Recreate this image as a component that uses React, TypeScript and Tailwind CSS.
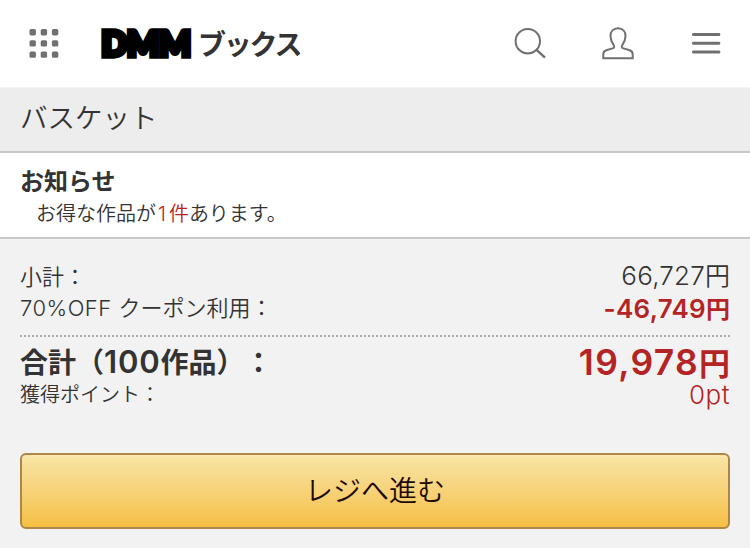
import type { ReactNode } from "react";

function GridIcon() {
  const cells = [0, 11.2, 22.4];
  return (
    <svg width="30" height="30" viewBox="0 0 30 30" fill="#707070">
      {cells.map((y) =>
        cells.map((x) => (
          <rect key={`${x}-${y}`} x={x + 0.5} y={y} width="6.4" height="6.4" rx="1.6" />
        ))
      )}
    </svg>
  );
}

function SearchIcon() {
  return (
    <svg width="32" height="32" viewBox="0 0 32 32" fill="none" stroke="#707070" strokeWidth="2">
      <circle cx="13.8" cy="13.2" r="12.2" />
      <path d="M22.3 21.7 31 29.7" strokeWidth="2.4" />
    </svg>
  );
}

function UserIcon() {
  return (
    <svg width="32" height="34" viewBox="0 0 32 34" fill="none" stroke="#707070" strokeWidth="2">
      <path d="M16 1.2c-4.6 0-7.5 3.3-7.5 7.7 0 3.6 1.3 6.6 3.2 9.2 1 1.4.5 2.7-1.2 3.3L4.3 23.3C2 24.1 1.3 25.3 1.3 27.3V31.2H30.7V27.3C30.7 25.3 30 24.1 27.7 23.3L21.5 21.4C19.8 20.8 19.3 19.5 20.3 18.1 22.2 15.5 23.5 12.5 23.5 8.9 23.5 4.5 20.6 1.2 16 1.2Z" />
    </svg>
  );
}

function MenuIcon() {
  return (
    <svg width="30" height="22" viewBox="0 0 30 22" stroke="#707070" strokeWidth="3" strokeLinecap="round">
      <path d="M2.4 1.6H27.9M2.4 10.3H27.9M2.4 18.9H27.9" />
    </svg>
  );
}

function Logo() {
  return (
    <div className="flex items-center">
      <svg width="94" height="40" viewBox="0 0 94 40" className="overflow-visible font-['Lato',sans-serif]">
        <text x="1.5 27 59" y="32.2" fontSize="33.5" fontWeight="900" stroke="#000" strokeWidth="5.5" strokeLinejoin="miter">
          DMM
        </text>
      </svg>
      <span className="mt-0.5 ml-[4px] text-[28px] leading-8 font-bold tracking-[-2.2px] text-[#333]">ブックス</span>
    </div>
  );
}

function Row({ label, children }: { label: ReactNode; children: ReactNode }) {
  return (
    <div className="flex h-8 items-center justify-between whitespace-nowrap">
      {label}
      {children}
    </div>
  );
}

export default function App() {
  return (
    <div className="h-[548px] w-[750px] overflow-hidden bg-[#f2f2f2] font-['Inter','Noto_Sans_CJK_JP',sans-serif] text-[#333] [text-spacing-trim:space-all]">
      <header className="flex h-[87px] items-center justify-between bg-white pr-[29px] pl-[29px]">
        <div className="flex items-center gap-[41px]">
          <GridIcon />
          <Logo />
        </div>
        <div className="flex items-center gap-14">
          <div className="flex items-center gap-14 pr-px">
            <SearchIcon />
            <UserIcon />
          </div>
          <MenuIcon />
        </div>
      </header>

      <h1 className="flex h-[66px] items-center border-t border-b-2 border-t-[#f5f5f5] border-b-[#c8c8c8] bg-[#ededed] px-5 pb-px text-[27.5px] font-[350]">
        バスケット
      </h1>

      <section className="h-[86px] border-b-2 border-[#c8c8c8] bg-white px-5 pt-[13px]">
        <h2 className="text-2xl leading-8 font-bold">お知らせ</h2>
        <p className="pl-4 text-xl leading-8 font-[350]">
          お得な作品が<span className="text-[#b42424]"><span className="mr-[3px] ml-0.5">1</span>件</span>あります。
        </p>
      </section>

      <section className="px-5 pt-[21px]">
        <Row label={<span className="pt-0.5 text-[22px] font-[350]">小計：</span>}>
          <span className="text-[25px] font-[350]"><span className="text-[26px] tracking-[0.2px]">66,727</span>円</span>
        </Row>
        <Row label={<span className="pt-px text-[22px] font-[350]"><span className="tracking-[0.5px]">70%OFF </span>クーポン利用：</span>}>
          <span className="text-[24px] font-bold text-[#b42424]"><span className="text-[26px] font-semibold tracking-[0.3px]">-46,749</span>円</span>
        </Row>
        <div className="mt-[11px] mb-[10px] border-t-2 border-dotted border-[#aaa]" />
        <Row label={<span className="text-[28px] font-bold">合計（<span className="text-[31px] leading-8 font-semibold tracking-[0.8px]">100</span>作品）：</span>}>
          <span className="pt-0.5 text-[31px] font-bold text-[#b42424]"><span className="text-[35.5px] leading-8 font-semibold tracking-[1.3px]">19,978</span>円</span>
        </Row>
        <Row label={<span className="text-xl font-[350]">獲得ポイント：</span>}>
          <span className="pb-0.5 text-[26px] font-[350] tracking-[0.5px] text-[#b42424]">0pt</span>
        </Row>
        <button className="mt-[42px] flex h-[76px] w-full items-center justify-center rounded-md border-2 border-[#ad8747] bg-linear-to-b from-[#f8e5a5] to-[#f5bf40] text-[28px] font-[350] text-[#1c0800] shadow-[inset_0_2px_0_#fce6b0]">
          レジへ進む
        </button>
      </section>
    </div>
  );
}
